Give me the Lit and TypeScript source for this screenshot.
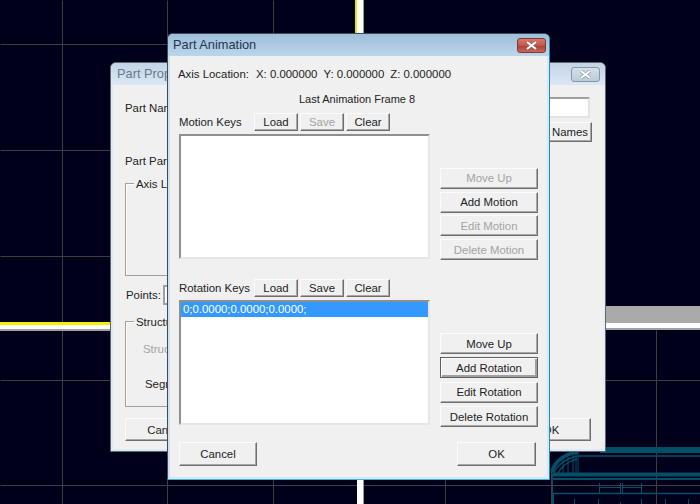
import { LitElement, html, css, svg } from "lit";
import { customElement } from "lit/decorators.js";

// grid lines of the 3D view behind the dialogs: [x1, y1, x2, y2]
const GRID = [
  [62, 0, 62, 504],
  [167, 0, 167, 504],
  [273, 0, 273, 504],
  [445, 470, 445, 504],
  [551, 470, 551, 504],
  [656, 330, 656, 504],
  [0, 44, 170, 44],
  [0, 150, 110, 150],
  [0, 256, 110, 256],
  [0, 380, 110, 380],
  [600, 380, 700, 380],
  [0, 485, 700, 485],
];

const closeIcon = html`<svg class="x" viewBox="0 0 13 9" width="13" height="9">
  <path d="M2 1 L11 8 M11 1 L2 8" stroke="#5a5a5a" stroke-width="3.4" opacity="0.55" fill="none" />
  <path d="M2 1 L11 8 M11 1 L2 8" stroke="#fff" stroke-width="2.2" fill="none" />
</svg>`;

@customElement("app-root")
export class AppRoot extends LitElement {
  static styles = css`
    :host {
      display: block;
      position: relative;
      width: 700px;
      height: 504px;
      overflow: hidden;
      background: #00001a;
      font-family: "Liberation Sans", Arial, sans-serif;
      font-size: 11.4px;
      line-height: 14px;
      color: #222;
      white-space: nowrap;
    }
    .view {
      position: absolute;
      inset: 0;
    }

    .win {
      position: absolute;
      box-sizing: border-box;
      display: flex;
      flex-direction: column;
      border: 1px solid #49586a;
      border-radius: 6px 6px 0 0;
      background: #f0f0f0;
    }
    .title {
      flex: none;
      display: flex;
      align-items: center;
      justify-content: space-between;
      height: 22px;
      padding: 0 3px 0 5px;
      border-radius: 5px 5px 0 0;
      font-size: 12.8px;
    }
    .close {
      display: flex;
      align-items: center;
      justify-content: center;
      box-sizing: border-box;
      width: 29px;
      height: 15px;
      border-radius: 3px;
    }

    /* inactive window behind */
    .back {
      left: 110px;
      top: 62px;
      width: 496px;
      height: 390px;
      border-color: #5d6772;
      box-shadow: inset 2px 0 #dce9f4, inset -2px 0 #e6eef6, inset 0 -2px #dce9f4;
    }
    .back .title {
      color: #67788f;
      background: linear-gradient(#c4d4e5, #dbe8f4);
      padding-left: 6px;
      padding-right: 5px;
    }
    .back .close {
      background: linear-gradient(#d4dfea, #bccbdb);
      border: 1px solid #8998a8;
    }
    .back-body {
      display: flex;
      flex-direction: column;
      padding: 12px 15px 0 14px;
    }
    .row {
      display: flex;
      align-items: center;
      justify-content: space-between;
    }
    .edit {
      box-sizing: border-box;
      width: 120px;
      height: 21px;
      background: #fff;
      border: 2px solid;
      border-color: #a0a0a0 #e3e3e3 #e3e3e3 #a0a0a0;
    }
    .names {
      align-self: flex-end;
      width: 44px;
      height: 20px;
      margin: 4px -2px 0 0;
    }
    .parent {
      margin-top: 12px;
    }
    .group {
      box-sizing: border-box;
      width: 400px;
      border: 1px solid #a0a0a0;
      box-shadow: inset 1px 1px #fff;
      padding: 0 0 0 8px;
    }
    .legend {
      width: fit-content;
      margin-top: -7px;
      padding: 0 2px;
      background: #f0f0f0;
    }
    .axis-box {
      height: 93px;
      margin-top: 15px;
    }
    .points {
      justify-content: flex-start;
      margin: 12px 0 0 1px;
      height: 14px;
    }
    .points span {
      width: 37px;
    }
    .points i {
      box-sizing: border-box;
      width: 60px;
      height: 20px;
      background: #fff;
      border: 2px solid #a0a0a0;
    }
    .struct-box {
      height: 86px;
      margin-top: 19px;
    }
    .struct-label {
      margin: 13px 0 0 9px;
    }
    .seg-label {
      margin: 21px 0 0 11px;
    }
    .off {
      color: #a3a3a3;
    }
    .back-foot {
      margin-top: 11px;
    }
    .back-foot .btn {
      width: 80px;
      height: 23px;
    }
    .back-foot .btn:last-child {
      margin-right: -1px;
    }

    /* active dialog */
    .main {
      left: 167px;
      top: 33px;
      width: 383px;
      height: 447px;
      border-color: #3d4c5c #1f8fb6 #3fb4d8 #3d4c5c;
      box-shadow: inset 2px 0 #cfe0ef, inset -2px 0 #d9e7f3, inset 0 -2px #d9e7f3;
    }
    .main .title {
      color: #1f3550;
      background: linear-gradient(#9fbedb, #bdd5ea);
    }
    .main .close {
      background: linear-gradient(#d9766a 0%, #c4574b 50%, #a83f35 51%, #c9675a 100%);
      border: 1px solid #7c3a36;
    }
    .main-body {
      display: flex;
      flex-direction: column;
      padding: 0 9px 0 11px;
    }
    .axis {
      display: flex;
      gap: 6px;
      margin: 11px 0 0 -1px;
    }
    .axis .lbl {
      width: 72px;
    }
    .frame {
      margin: 11px 0 0 120px;
      font-size: 11px;
    }
    .head {
      display: flex;
      gap: 2px;
      align-items: center;
      height: 18px;
    }
    .head .lbl {
      width: 73px;
    }
    .head .btn {
      width: 44px;
      height: 18px;
    }
    .motion-head {
      margin-top: 7px;
    }
    .rot-head {
      margin-top: 20px;
    }
    .keys {
      display: grid;
      grid-template-columns: 251px 98px;
      column-gap: 10px;
      margin-top: 3px;
    }
    .list {
      box-sizing: border-box;
      height: 125px;
      background: #fff;
      border: 2px solid;
      border-color: #8f8f8f #e6e6e6 #e6e6e6 #8f8f8f;
      padding: 0;
    }
    .item {
      height: 15px;
      line-height: 15px;
      padding-left: 2px;
      color: #fff;
      background: #3399ff;
    }
    .side {
      display: flex;
      flex-direction: column;
      justify-content: flex-end;
    }
    .motion-side {
      gap: 2.7px;
      margin-bottom: -1px;
    }
    .rot-side {
      gap: 3.3px;
      margin-bottom: -2px;
    }
    .side .btn {
      width: 98px;
      height: 21px;
    }
    .foot {
      display: flex;
      justify-content: space-between;
      margin: 17px 4px 0 0;
    }
    .foot .btn {
      width: 78px;
      height: 24px;
    }
    .foot .btn:last-child {
      width: 79px;
    }

    .btn {
      box-sizing: border-box;
      display: flex;
      align-items: center;
      justify-content: center;
      flex: none;
      background: #f0f0f0;
      border: 1px solid;
      border-color: #fbfbfb #6e6e6e #6e6e6e #fbfbfb;
      box-shadow: inset -1px -1px #a8a8a8;
    }
    .btn.dis {
      color: #a3a3a3;
    }
    .btn.def {
      border-color: #5e5e5e;
      box-shadow: inset 1px 1px #fbfbfb, inset -2px -2px #a0a0a0;
    }
  `;

  renderView() {
    return html`<svg class="view" viewBox="0 0 700 504" width="700" height="504">
      ${GRID.map(
        ([x1, y1, x2, y2]) =>
          svg`<line x1=${x1 + 0.5} y1=${y1 + 0.5} x2=${x2 + 0.5} y2=${y2 + 0.5} stroke="#3e3e42" />`
      )}
      <!-- axes -->
      <rect x="355" y="0" width="2" height="40" fill="#e8e800" />
      <rect x="357" y="0" width="6" height="504" fill="#fff" />
      <rect x="363" y="0" width="1" height="504" fill="#9a9a9a" />
      <rect x="0" y="322" width="112" height="3" fill="#f2f200" />
      <rect x="0" y="325" width="112" height="4" fill="#fff" />
      <rect x="0" y="329" width="112" height="2" fill="#a0a0a0" />
      <rect x="600" y="306" width="100" height="17" fill="#aaa" />
      <rect x="600" y="323" width="100" height="5" fill="#fff" />
      <rect x="600" y="328" width="100" height="2" fill="#a0a0a0" />
      <!-- wireframe model, bottom right -->
      <g fill="none" stroke="#005068">
        <path d="M600 450 H700" stroke-width="6" />
        <path d="M578 456 H700" stroke-width="1.5" />
        <path d="M552 474.5 H700" stroke-width="4" />
        <path d="M552 479 H700" stroke-width="2" />
        <path d="M553 493.5 H700" stroke-width="1.5" />
        <path d="M552.5 474 V504 M553.5 493 V504" />
        <path d="M578 452 V476 M576 453 V474" />
        <path d="M552 472 C554 462 564 454 578 452" stroke-width="3.5" />
        <path d="M553 474 C557 465 566 459 577 456 M558 473 C561 467 568 461 577 459" stroke-width="1.5" />
        <path d="M563 460 V475 M568 457 V475 M573 455 V475" />
        <path d="M599.5 483 V493 M620.5 483 V493 M622.5 483 V493 M641.5 483 V493 M599 487.5 H620 M623 487.5 H641" />
        <path d="M574.5 499 V504 M598.5 499 V504 M620.5 502 V504 M641.5 499 V504 M665.5 499 V504 M688.5 499 V504" />
      </g>
    </svg>`;
  }

  renderBack() {
    return html`<div class="win back">
      <div class="title"><span>Part Properties</span><span class="close">${closeIcon}</span></div>
      <div class="back-body">
        <div class="row"><span>Part Name:</span><div class="edit"></div></div>
        <div class="btn names">Names</div>
        <div class="parent">Part Parent:</div>
        <div class="group axis-box"><div class="legend">Axis Location</div></div>
        <div class="row points"><span>Points:</span><i></i></div>
        <div class="group struct-box">
          <div class="legend">Structure</div>
          <div class="struct-label off">Structure</div>
          <div class="seg-label">Segments</div>
        </div>
        <div class="row back-foot"><div class="btn">Cancel</div><div class="btn">OK</div></div>
      </div>
    </div>`;
  }

  renderMain() {
    return html`<div class="win main">
      <div class="title"><span>Part Animation</span><span class="close">${closeIcon}</span></div>
      <div class="main-body">
        <div class="axis">
          <span class="lbl">Axis Location:</span>
          <span>X: 0.000000</span>
          <span>Y: 0.000000</span>
          <span>Z: 0.000000</span>
        </div>
        <div class="frame">Last Animation Frame 8</div>

        <div class="head motion-head">
          <span class="lbl">Motion Keys</span>
          <div class="btn">Load</div>
          <div class="btn dis">Save</div>
          <div class="btn">Clear</div>
        </div>
        <div class="keys">
          <div class="list"></div>
          <div class="side motion-side">
            <div class="btn dis">Move Up</div>
            <div class="btn">Add Motion</div>
            <div class="btn dis">Edit Motion</div>
            <div class="btn dis">Delete Motion</div>
          </div>
        </div>

        <div class="head rot-head">
          <span class="lbl">Rotation Keys</span>
          <div class="btn">Load</div>
          <div class="btn">Save</div>
          <div class="btn">Clear</div>
        </div>
        <div class="keys">
          <div class="list"><div class="item">0;0.0000;0.0000;0.0000;</div></div>
          <div class="side rot-side">
            <div class="btn">Move Up</div>
            <div class="btn def">Add Rotation</div>
            <div class="btn">Edit Rotation</div>
            <div class="btn">Delete Rotation</div>
          </div>
        </div>

        <div class="foot">
          <div class="btn">Cancel</div>
          <div class="btn">OK</div>
        </div>
      </div>
    </div>`;
  }

  render() {
    return html`${this.renderView()}${this.renderBack()}${this.renderMain()}`;
  }
}
